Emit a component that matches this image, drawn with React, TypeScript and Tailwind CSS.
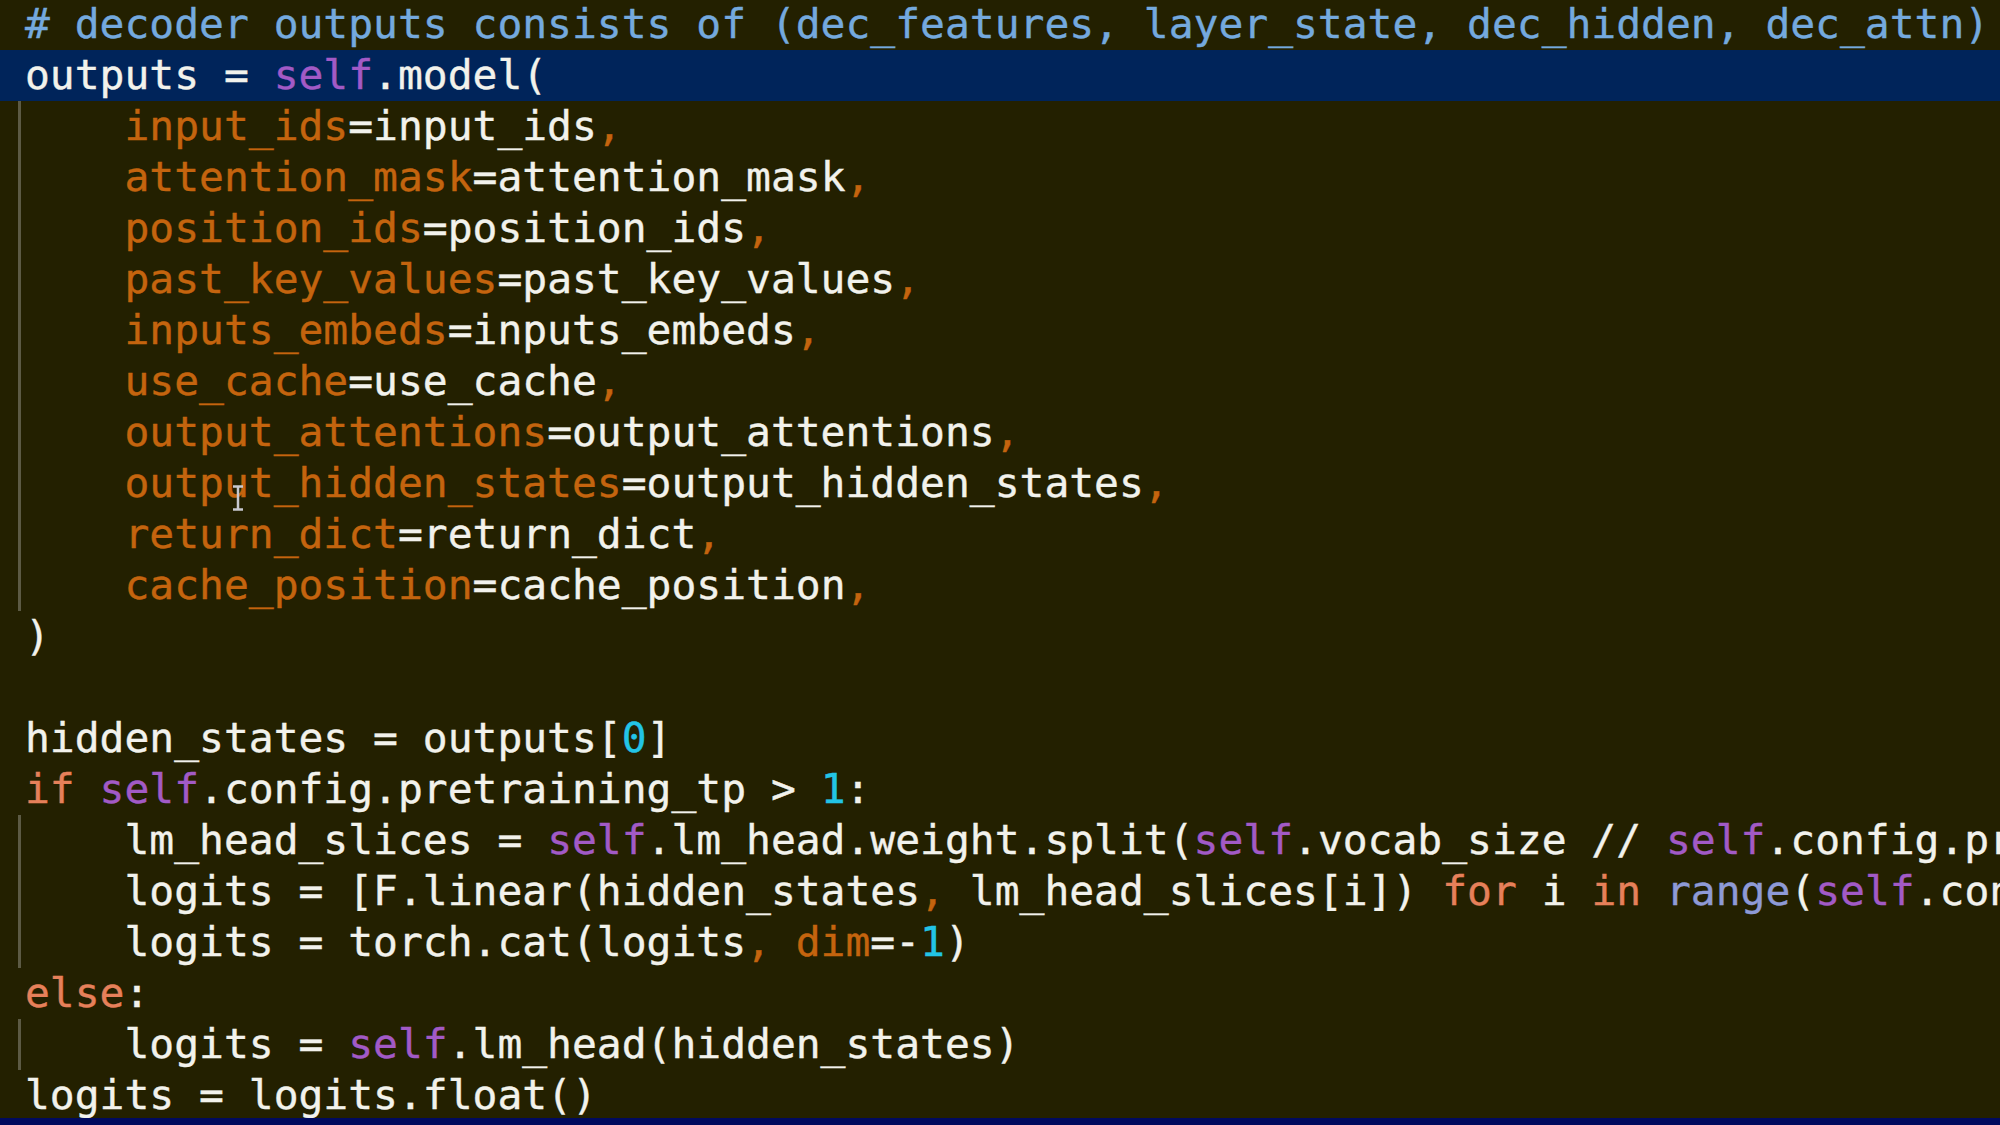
import React from "react";

type Tok = [string, string];

const W = "text-[#f2f2ec]";
const C = "text-[#74a9de]";
const P = "text-[#c4640e]";
const S = "text-[#a25ac6]";
const N = "text-[#22c4e6]";
const K = "text-[#e6805a]";
const R = "text-[#8e9ad6]";

function Line({ toks, hl }: { toks: Tok[]; hl?: boolean }) {
  return (
    <div className={`h-[51px] leading-[51px] whitespace-pre ${hl ? "bg-[#00245a] -ml-[25px] pl-[25px]" : ""}`}>
      {toks.map(([c, t], i) => (
        <span key={i} className={c}>
          {t}
        </span>
      ))}
    </div>
  );
}

function Block({ children }: { children: React.ReactNode }) {
  return <div className="-ml-[7px] border-l-[3px] border-[#5c5a44] pl-[4px]">{children}</div>;
}

export default function App() {
  return (
    <div className="relative w-[2000px] h-[1125px] overflow-hidden bg-[#232000]">
      <div
        className="pl-[25px] -mt-[1px] text-[41.3px] [-webkit-text-stroke:0.4px_currentColor]"
        style={{ fontFamily: '"DejaVu Sans Mono", monospace' }}
      >
        <Line toks={[[C, "# decoder outputs consists of (dec_features, layer_state, dec_hidden, dec_attn)"]]} />
        <Line hl toks={[[W, "outputs = "], [S, "self"], [W, ".model("]]} />
        <Block>
          <Line toks={[[W, "    "], [P, "input_ids"], [W, "=input_ids"], [P, ","]]} />
          <Line toks={[[W, "    "], [P, "attention_mask"], [W, "=attention_mask"], [P, ","]]} />
          <Line toks={[[W, "    "], [P, "position_ids"], [W, "=position_ids"], [P, ","]]} />
          <Line toks={[[W, "    "], [P, "past_key_values"], [W, "=past_key_values"], [P, ","]]} />
          <Line toks={[[W, "    "], [P, "inputs_embeds"], [W, "=inputs_embeds"], [P, ","]]} />
          <Line toks={[[W, "    "], [P, "use_cache"], [W, "=use_cache"], [P, ","]]} />
          <Line toks={[[W, "    "], [P, "output_attentions"], [W, "=output_attentions"], [P, ","]]} />
          <Line toks={[[W, "    "], [P, "output_hidden_states"], [W, "=output_hidden_states"], [P, ","]]} />
          <Line toks={[[W, "    "], [P, "return_dict"], [W, "=return_dict"], [P, ","]]} />
          <Line toks={[[W, "    "], [P, "cache_position"], [W, "=cache_position"], [P, ","]]} />
        </Block>
        <Line toks={[[W, ")"]]} />
        <Line toks={[[W, " "]]} />
        <Line toks={[[W, "hidden_states = outputs["], [N, "0"], [W, "]"]]} />
        <Line toks={[[K, "if "], [S, "self"], [W, ".config.pretraining_tp > "], [N, "1"], [W, ":"]]} />
        <Block>
          <Line
            toks={[
              [W, "    lm_head_slices = "],
              [S, "self"],
              [W, ".lm_head.weight.split("],
              [S, "self"],
              [W, ".vocab_size // "],
              [S, "self"],
              [W, ".config.pr"],
            ]}
          />
          <Line
            toks={[
              [W, "    logits = [F.linear(hidden_states"],
              [P, ","],
              [W, " lm_head_slices[i]) "],
              [K, "for"],
              [W, " i "],
              [K, "in"],
              [W, " "],
              [R, "range"],
              [W, "("],
              [S, "self"],
              [W, ".con"],
            ]}
          />
          <Line toks={[[W, "    logits = torch.cat(logits"], [P, ", dim"], [W, "=-"], [N, "1"], [W, ")"]]} />
        </Block>
        <Line toks={[[K, "else"], [W, ":"]]} />
        <Block>
          <Line toks={[[W, "    logits = "], [S, "self"], [W, ".lm_head(hidden_states)"]]} />
        </Block>
        <Line toks={[[W, "logits = logits.float()"]]} />
      </div>
      <svg className="absolute left-[232px] top-[485px]" width="12" height="26" viewBox="0 0 12 26">
        <path d="M1 1.5h10M1 24.5h10M6 1.5v23" stroke="#c8c8d0" strokeWidth="2.5" fill="none" />
      </svg>
      <div className="absolute left-0 bottom-0 w-full h-[7px] bg-[#000a5e]" />
    </div>
  );
}
